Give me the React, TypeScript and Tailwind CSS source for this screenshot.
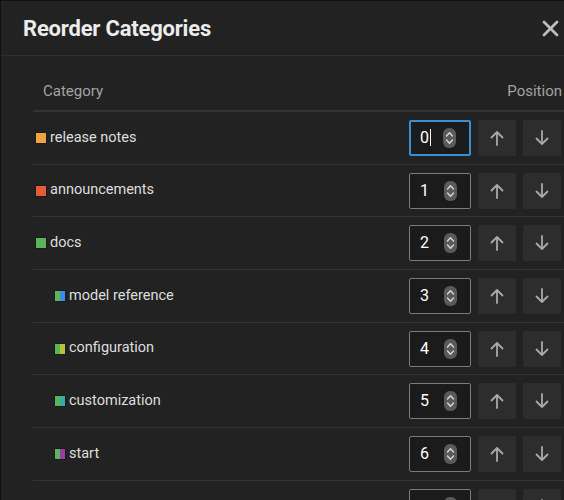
import React from "react";

type Cat = { name: string; color: string; parent?: string; sub?: boolean };

const cats: Cat[] = [
  { name: "release notes", color: "#f1a33d" },
  { name: "announcements", color: "#e45c38" },
  { name: "docs", color: "#5cb35c" },
  { name: "model reference", color: "#3b8fdb", parent: "#5cb35c", sub: true },
  { name: "configuration", color: "#b9c33a", parent: "#5cb35c", sub: true },
  { name: "customization", color: "#3aaaa5", parent: "#5cb35c", sub: true },
  { name: "start", color: "#9a3da0", parent: "#5cb35c", sub: true },
  { name: "", color: "#5cb35c" },
];

function Spinner() {
  return (
    <div className="w-[13px] h-[20px] rounded-[6px] bg-[#5a5a5a] flex flex-col items-center justify-center gap-[2px]">
      <svg width="9" height="6" viewBox="0 0 9 6" fill="none">
        <path d="M1.5 5 L4.5 1.8 L7.5 5" stroke="#d8d8d8" strokeWidth="1.4" strokeLinecap="round" strokeLinejoin="round" />
      </svg>
      <svg width="9" height="6" viewBox="0 0 9 6" fill="none">
        <path d="M1.5 1 L4.5 4.2 L7.5 1" stroke="#d8d8d8" strokeWidth="1.4" strokeLinecap="round" strokeLinejoin="round" />
      </svg>
    </div>
  );
}

function Arrow({ down }: { down?: boolean }) {
  return (
    <svg width="14" height="16" viewBox="0 0 14 16" fill="none" className={down ? "rotate-180" : ""}>
      <path d="M7 15 V2 M1.5 7.5 L7 2 L12.5 7.5" stroke="#a9a9a9" strokeWidth="1.8" strokeLinecap="round" strokeLinejoin="round" />
    </svg>
  );
}

function Row({ c, i }: { c: Cat; i: number }) {
  const focused = i === 0;
  return (
    <div className="h-[52.7px] flex items-center border-b border-[#333333] shrink-0">
      <div className={`flex items-center gap-[3px] ${c.sub ? "pl-[21px]" : "pl-[2px]"}`}>
        {c.name && (
          c.parent ? (
            <span className="w-[12px] h-[12px] flex shrink-0 border border-[#1a1a1a]">
              <span className="w-1/2 h-full" style={{ background: c.parent }} />
              <span className="w-1/2 h-full" style={{ background: c.color }} />
            </span>
          ) : (
            <span className="w-[12px] h-[12px] shrink-0 border border-[#1a1a1a]" style={{ background: c.color }} />
          )
        )}
        <span className="text-[14.5px] text-[#dedede] leading-none">{c.name}</span>
      </div>
      <div className="ml-auto flex items-center gap-[7px] pr-[3px]">
        <div
          className={`w-[62px] h-[36px] rounded-[2px] bg-[#1b1b1b] flex items-center pl-[10px] pr-[13px] justify-between ${
            focused ? "border-2 border-[#3a8fd0]" : "border border-[#7a7a7a]"
          }`}
        >
          <span className={`text-[16px] text-white leading-none ${focused ? "-ml-[1px]" : ""}`}>
            {i}
            {focused && <span className="inline-block w-[1px] h-[17px] bg-white align-middle ml-[1px] -mt-[2px]" />}
          </span>
          <Spinner />
        </div>
        <button className="w-[38px] h-[36px] rounded-[2px] bg-[#2d2d2d] flex items-center justify-center">
          <Arrow />
        </button>
        <button className="w-[38px] h-[36px] rounded-[2px] bg-[#2d2d2d] flex items-center justify-center">
          <Arrow down />
        </button>
      </div>
    </div>
  );
}

export default function App() {
  return (
    <div
      className="w-[564px] h-[500px] overflow-hidden bg-[#222222] border-l border-t border-[#111111] flex flex-col"
      style={{ fontFamily: "Roboto, 'Noto Sans', sans-serif" }}
    >
      <div className="h-[55px] shrink-0 flex items-center justify-between pl-[22px] pr-[3px] border-b border-[#2f2f2f]">
        <h1 className="text-[22px] font-bold text-[#ececec] tracking-[-0.2px]">Reorder Categories</h1>
        <svg width="19" height="19" viewBox="0 0 19 19" fill="none" className="mr-[1px]">
          <path d="M3 3 L16 16 M16 3 L3 16" stroke="#bdbdbd" strokeWidth="2.8" strokeLinecap="round" />
        </svg>
      </div>
      <div className="pl-[32px] flex flex-col">
        <div className="h-[56px] shrink-0 flex items-end justify-between pb-[11px] pl-[10px] border-b-2 border-[#333333] text-[15px] text-[#a3a3a3] leading-none">
          <span>Category</span>
          <span className="pr-[2px]">Position</span>
        </div>
        {cats.map((c, i) => (
          <Row key={i} c={c} i={i} />
        ))}
      </div>
    </div>
  );
}
